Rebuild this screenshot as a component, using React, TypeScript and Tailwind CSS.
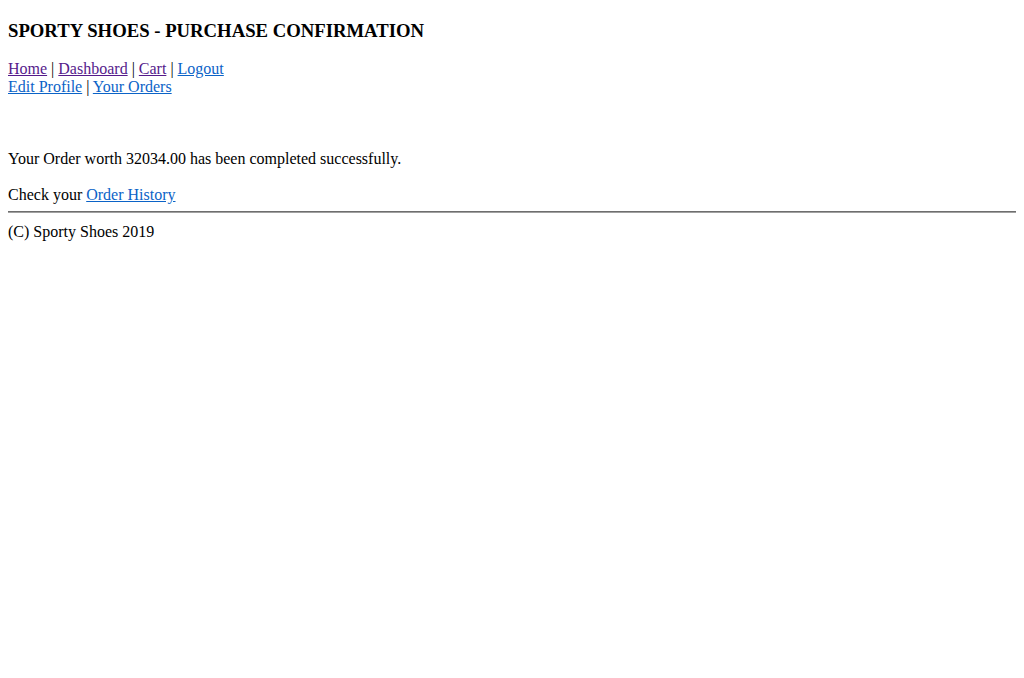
export default function App() {
  const link = "underline text-[#0b63c7]";
  const visited = "underline text-[#551a8b]";

  return (
    <div className="min-h-screen bg-white px-2 text-black text-base leading-[1.15] font-['Liberation_Serif','Times_New_Roman',serif]">
      <h3 className="pt-[19.7px] mb-[18.72px] text-[18.72px] font-bold">
        SPORTY SHOES - PURCHASE CONFIRMATION
      </h3>

      <div>
        <a href="#" className={visited}>Home</a> | <a href="#" className={visited}>Dashboard</a> |{" "}
        <a href="#" className={visited}>Cart</a> | <a href="#" className={link}>Logout</a>
      </div>
      <div>
        <a href="#" className={link}>Edit Profile</a> | <a href="#" className={link}>Your Orders</a>
      </div>

      <p className="mt-[53.5px]">Your Order worth 32034.00 has been completed successfully.</p>
      <p className="mt-[17.6px]">
        Check your <a href="#" className={link}>Order History</a>
      </p>

      <hr className="mt-[6px] mb-[10px] border-t border-b border-t-[#6e6e6e] border-b-[#a0a0a0]" />

      <div>(C) Sporty Shoes 2019</div>
    </div>
  );
}
